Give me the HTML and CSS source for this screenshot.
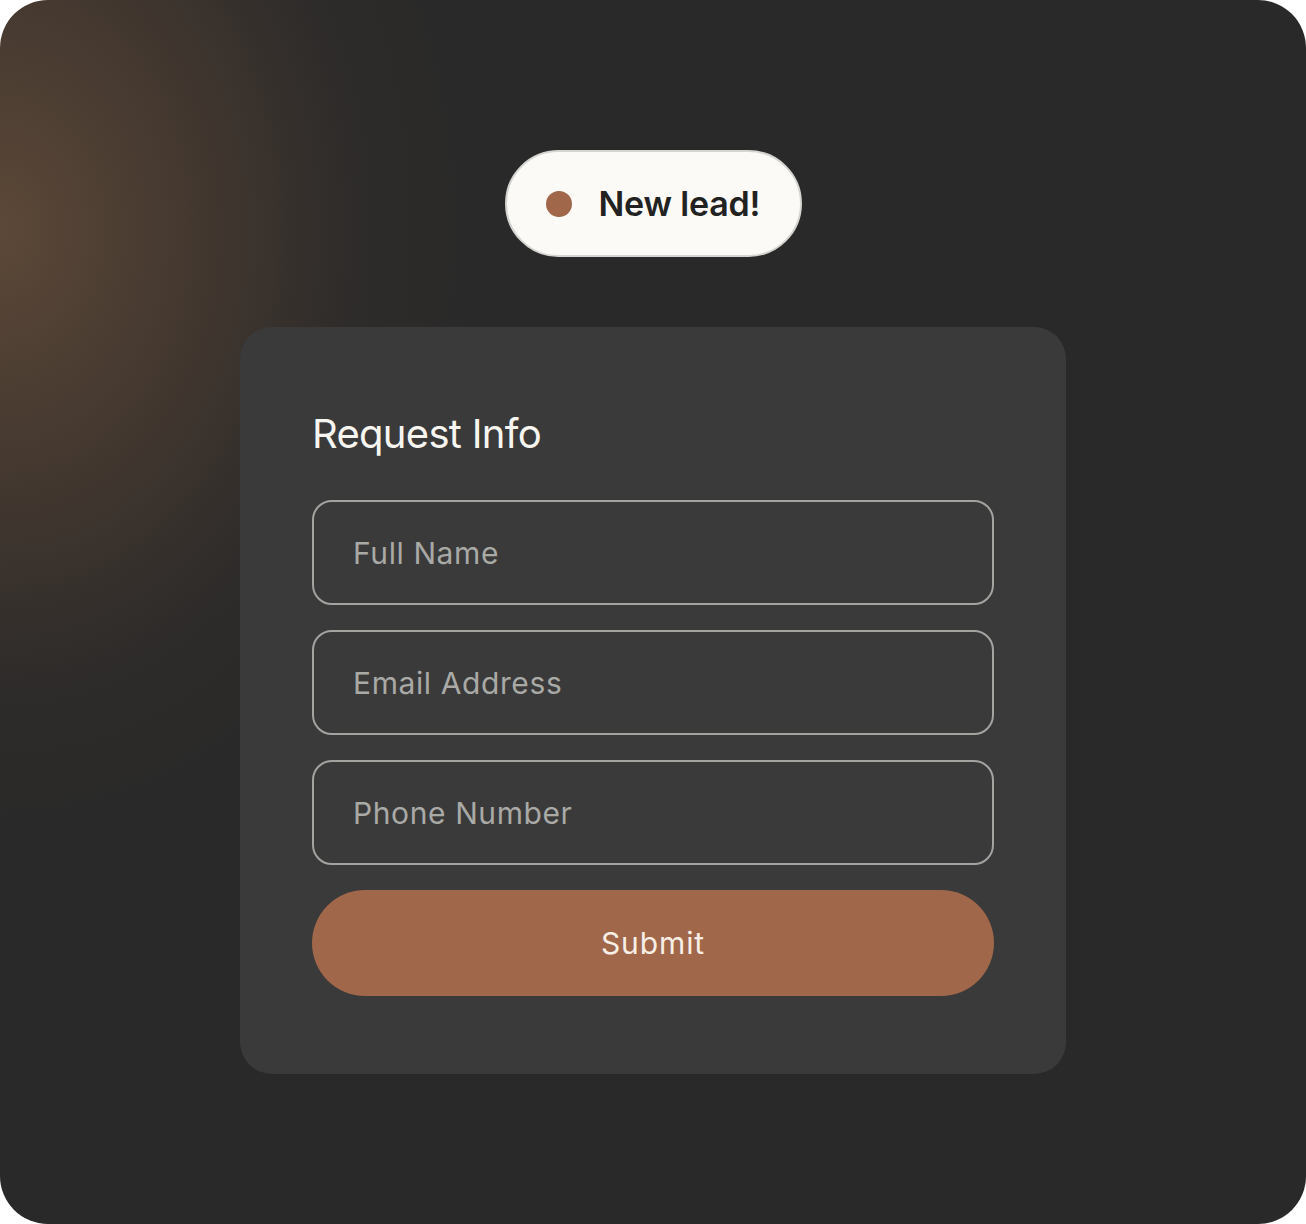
FILE: index.html
```html
<!DOCTYPE html>
<html lang="en">
<head>
<meta charset="utf-8">
<title>Request Info</title>
<link rel="stylesheet" href="styles.css">
</head>
<body>
<main class="stage">
  <div class="toast">
    <span class="toast-dot"></span>
    <span class="toast-text">New lead!</span>
  </div>
  <section class="card">
    <h1 class="card-title">Request Info</h1>
    <form class="form">
      <div class="field">Full Name</div>
      <div class="field">Email Address</div>
      <div class="field">Phone Number</div>
      <div class="submit">Submit</div>
    </form>
  </section>
</main>
</body>
</html>
```

FILE: styles.css
```css
* { box-sizing: border-box; }
html, body { margin: 0; padding: 0; background: #ffffff; }
body { font-family: "Inter", "Liberation Sans", sans-serif; }

.stage {
  width: 1306px;
  height: 1224px;
  border-radius: 48px;
  overflow: hidden;
  background:
    radial-gradient(ellipse 500px 640px at 0px 230px, rgba(92, 72, 56, 1) 0%, rgba(78, 62, 50, 0.78) 35%, rgba(55, 48, 44, 0.38) 70%, rgba(41, 41, 41, 0) 100%),
    #292929;
  display: flex;
  flex-direction: column;
  align-items: center;
  padding-top: 150px;
}

.toast {
  width: 297px;
  height: 107px;
  border-radius: 54px;
  background: #fbfaf6;
  border: 2px solid #d4d4d0;
  display: flex;
  align-items: center;
  padding-left: 39px;
  gap: 27px;
}
.toast-dot {
  width: 26px;
  height: 26px;
  border-radius: 50%;
  background: #a0674a;
  flex: none;
}
.toast-text {
  font-size: 34px;
  font-weight: 600;
  color: #222222;
  letter-spacing: -0.2px;
}

.card {
  margin-top: 70px;
  width: 826px;
  height: 747px;
  border-radius: 32px;
  background: #3a3a3a;
  padding: 0 72px;
}
.card-title {
  margin: 0;
  padding-top: 83px;
  font-size: 40px;
  line-height: 48px;
  font-weight: 400;
  color: #f7f5f0;
  letter-spacing: -0.7px;
}
.form {
  margin-top: 42px;
  display: flex;
  flex-direction: column;
  gap: 25px;
}
.field {
  height: 105px;
  border: 2px solid #a3a3a0;
  border-radius: 20px;
  display: flex;
  align-items: center;
  padding-left: 39px;
  font-size: 30px;
  color: #a9a9a6;
  letter-spacing: 0.6px;
}
.submit {
  height: 106px;
  border-radius: 53px;
  background: #a0674a;
  display: flex;
  align-items: center;
  justify-content: center;
  font-size: 30px;
  color: #f7efe6;
  letter-spacing: 0.9px;
}
```
